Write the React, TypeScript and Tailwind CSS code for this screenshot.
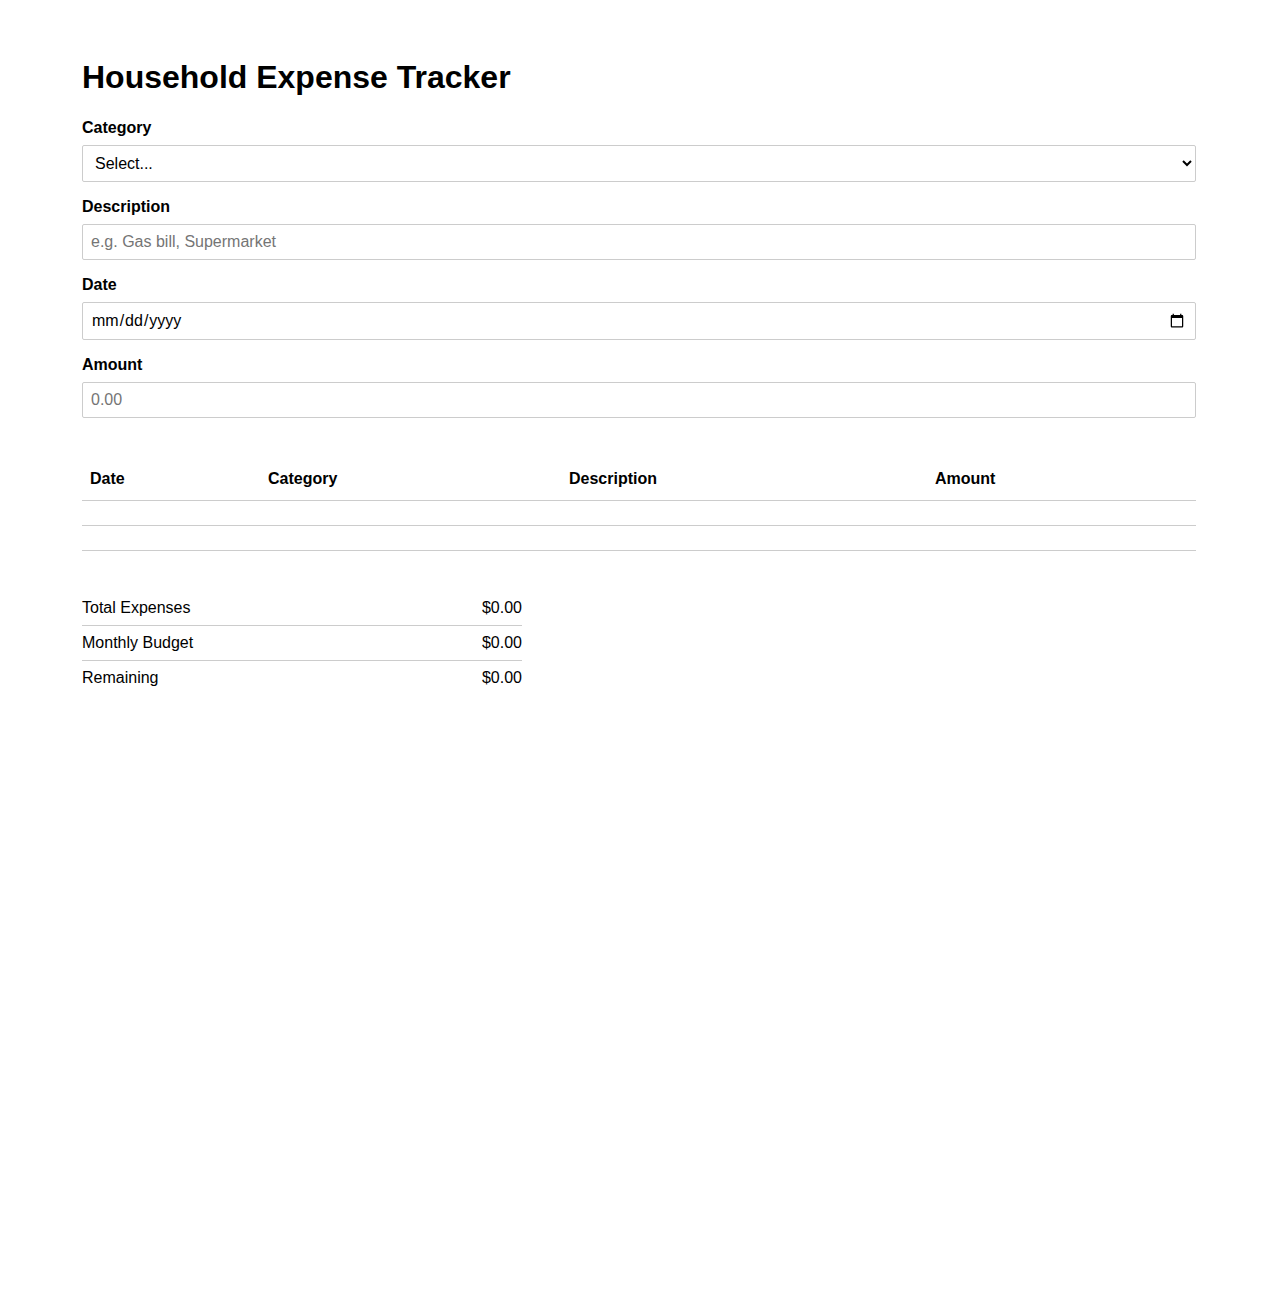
import { useState } from 'react';

interface Expense {
  id: string;
  date: string;
  category: string;
  description: string;
  amount: number;
}

const categories = ['Groceries', 'Utilities', 'Rent', 'Transport', 'Entertainment', 'Other'];

export default function App() {
  const [category, setCategory] = useState('');
  const [description, setDescription] = useState('');
  const [date, setDate] = useState('');
  const [amount, setAmount] = useState('');
  const [expenses] = useState<Expense[]>([]);
  const budget = 0;

  const total = expenses.reduce((sum, e) => sum + e.amount, 0);
  const fmt = (n: number) => `$${n.toFixed(2)}`;

  // two empty rows are shown while there is no data
  const rows = expenses.length > 0 ? expenses : [null, null];

  return (
    <div className="min-h-screen bg-white text-black font-['Liberation_Sans',Arial,sans-serif]">
      <div className="mx-auto w-[1114px] pt-[59px] pb-10">
        <h1 className="text-[32px] leading-[37px] font-bold mb-[23px]">Household Expense Tracker</h1>

        {/* Form */}
        <div className="flex flex-col">
          <div className="mb-4">
            <label className="block font-bold text-base leading-[18px] mb-2">Category</label>
            <select
              value={category}
              onChange={e => setCategory(e.target.value)}
              className="w-full h-[37px] border border-[#ccc] rounded-[2px] px-2 text-base bg-white"
            >
              <option value="">Select...</option>
              {categories.map(c => (
                <option key={c} value={c}>{c}</option>
              ))}
            </select>
          </div>

          <div className="mb-4">
            <label className="block font-bold text-base leading-[18px] mb-2">Description</label>
            <input
              type="text"
              value={description}
              onChange={e => setDescription(e.target.value)}
              placeholder="e.g. Gas bill, Supermarket"
              className="w-full h-[36px] border border-[#ccc] rounded-[2px] px-2 text-base placeholder:text-[#757575]"
            />
          </div>

          <div className="mb-4">
            <label className="block font-bold text-base leading-[18px] mb-2">Date</label>
            <input
              type="date"
              value={date}
              onChange={e => setDate(e.target.value)}
              className="w-full h-[38px] border border-[#ccc] rounded-[2px] px-2 text-base"
            />
          </div>

          <div>
            <label className="block font-bold text-base leading-[18px] mb-2">Amount</label>
            <input
              type="number"
              value={amount}
              onChange={e => setAmount(e.target.value)}
              placeholder="0.00"
              className="w-full h-[36px] border border-[#ccc] rounded-[2px] px-2 text-base placeholder:text-[#757575]"
            />
          </div>
        </div>

        {/* Expense table */}
        <table className="mt-[38px] w-full border-collapse table-fixed">
          <colgroup>
            <col className="w-[178px]" />
            <col className="w-[301px]" />
            <col className="w-[366px]" />
            <col className="w-[269px]" />
          </colgroup>
          <thead>
            <tr className="border-b border-[#ccc]">
              <th className="text-left font-bold text-base leading-5 px-2 pt-[13px] pb-[11px]">Date</th>
              <th className="text-left font-bold text-base leading-5 px-2 pt-[13px] pb-[11px]">Category</th>
              <th className="text-left font-bold text-base leading-5 px-2 pt-[13px] pb-[11px]">Description</th>
              <th className="text-left font-bold text-base leading-5 px-2 pt-[13px] pb-[11px]">Amount</th>
            </tr>
          </thead>
          <tbody>
            {rows.map((row, i) => (
              <tr key={row ? row.id : i} className="border-b border-[#ccc]">
                <td className="px-2 py-3 text-base leading-[0px]">{row?.date}</td>
                <td className="px-2 py-3 text-base leading-[0px]">{row?.category}</td>
                <td className="px-2 py-3 text-base leading-[0px]">{row?.description}</td>
                <td className="px-2 py-3 text-base leading-[0px]">{row ? fmt(row.amount) : ''}</td>
              </tr>
            ))}
          </tbody>
        </table>

        {/* Summary */}
        <div className="mt-10 w-[440px]">
          <div className="flex justify-between py-2 text-base leading-[18px] border-b border-[#ccc]">
            <span>Total Expenses</span>
            <span>{fmt(total)}</span>
          </div>
          <div className="flex justify-between py-2 text-base leading-[18px] border-b border-[#ccc]">
            <span>Monthly Budget</span>
            <span>{fmt(budget)}</span>
          </div>
          <div className="flex justify-between py-2 text-base leading-[18px]">
            <span>Remaining</span>
            <span>{fmt(budget - total)}</span>
          </div>
        </div>
      </div>
    </div>
  );
}
